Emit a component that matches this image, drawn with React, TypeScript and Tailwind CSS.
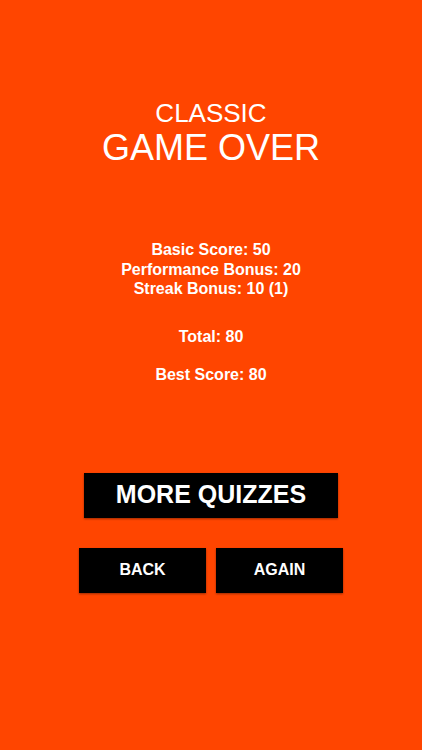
export default function App() {
  return (
    <div
      className="w-[422px] h-[750px] bg-[#ff4500] text-white flex flex-col items-center"
      style={{ fontFamily: '"Liberation Sans", Arial, sans-serif' }}
    >
      <div className="mt-[98px] flex flex-col items-center">
        <div className="text-[26px] leading-[30px]">CLASSIC</div>
        <div className="text-[36px] leading-[40px]">GAME OVER</div>
      </div>

      <div className="mt-[72px] flex flex-col items-center font-bold text-[16px] leading-[19.5px]">
        <div>Basic Score: 50</div>
        <div>Performance Bonus: 20</div>
        <div>Streak Bonus: 10 (1)</div>
        <div className="mt-[28px]">Total: 80</div>
        <div className="mt-[19px]">Best Score: 80</div>
      </div>

      <button className="mt-[88px] w-[254px] h-[45px] bg-black text-white font-bold text-[25px] shadow-[0_1px_2px_rgba(0,0,0,0.4)]">
        MORE QUIZZES
      </button>

      <div className="mt-[30px] flex gap-[10px]">
        <button className="w-[127px] h-[45px] bg-black text-white font-bold text-[16px] shadow-[0_1px_2px_rgba(0,0,0,0.4)]">
          BACK
        </button>
        <button className="w-[127px] h-[45px] bg-black text-white font-bold text-[16px] shadow-[0_1px_2px_rgba(0,0,0,0.4)]">
          AGAIN
        </button>
      </div>
    </div>
  );
}
